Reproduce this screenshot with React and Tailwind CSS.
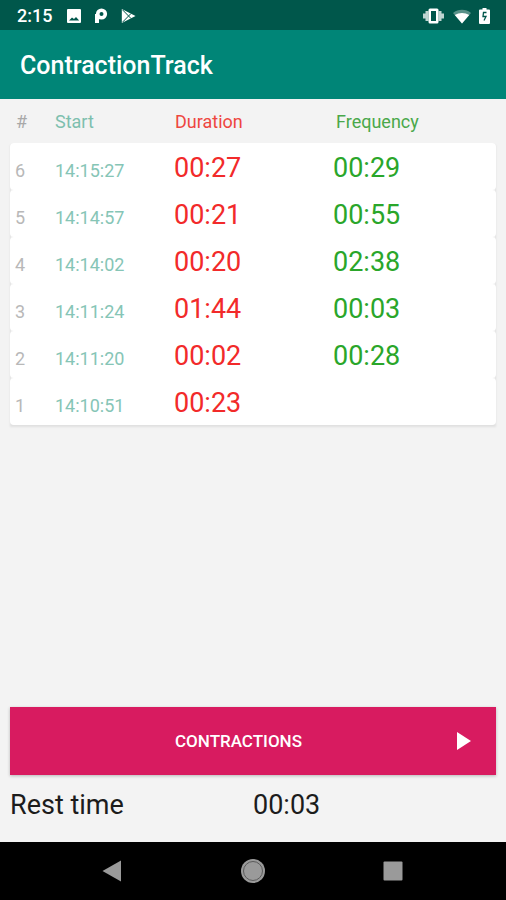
const contractions = [
    { id: 6, start: '14:15:27', duration: '00:27', frequency: '00:29' },
    { id: 5, start: '14:14:57', duration: '00:21', frequency: '00:55' },
    { id: 4, start: '14:14:02', duration: '00:20', frequency: '02:38' },
    { id: 3, start: '14:11:24', duration: '01:44', frequency: '00:03' },
    { id: 2, start: '14:11:20', duration: '00:02', frequency: '00:28' },
    { id: 1, start: '14:10:51', duration: '00:23', frequency: '' },
];

function StatusBar() {
    return (
        <div className="flex h-[30px] items-center justify-between bg-[#00574b] pl-[17px] pr-4 pt-[2px] text-white">
            <div className="flex items-center">
                <span className="text-[18px] leading-[24px] font-medium">2:15</span>
                <svg className="ml-[15px] h-[14px] w-[14px]" viewBox="0 0 14 14" fill="currentColor">
                    <path
                        fillRule="evenodd"
                        d="M1 0h12a1 1 0 0 1 1 1v12a1 1 0 0 1-1 1H1a1 1 0 0 1-1-1V1a1 1 0 0 1 1-1zM2 11.5h10.200L9 8 7 10 5 8.500z"
                    />
                </svg>
                <svg className="ml-[13px] h-[16px] w-[14px]" viewBox="0 0 14 16" fill="none" stroke="currentColor">
                    <circle cx="7.5" cy="6" r="3.8" strokeWidth="3.6" />
                    <path d="M3 6v9" strokeWidth="4" />
                    <path d="M3 9.5h4" strokeWidth="3" />
                </svg>
                <svg className="ml-[13px] h-[16px] w-[15px]" viewBox="0 0 15 16">
                    <path d="M.8 1v14L14.5 8z" fill="currentColor" />
                    <path d="M1.5 1.8 10 10.5M1.5 14.2 10 5.5" stroke="#00574b" strokeWidth="1" fill="none" />
                </svg>
            </div>
            <div className="flex items-center">
                <svg className="h-[16px] w-[21px]" viewBox="0 0 21 16" fill="currentColor">
                    <path d="M0 5.5h2.5v5H0zM2.5 3h3v10h-3zM15.5 3h3v10h-3zM18.5 5.5H21v5h-2.5z" fillOpacity="0.75" />
                    <path
                        fillRule="evenodd"
                        d="M7 .5h7A1.5 1.5 0 0 1 15.5 2v12a1.5 1.5 0 0 1-1.5 1.5H7A1.5 1.5 0 0 1 5.5 14V2A1.5 1.5 0 0 1 7 .5zM8 3v10h5V3z"
                    />
                </svg>
                <svg className="ml-[9px] h-[15px] w-[18px]" viewBox="0 0 18 15" fill="currentColor">
                    <path d="M0 4C5-.2 13-.2 18 4L9 14.5z" fillOpacity="0.35" />
                    <path d="M1.8 6C6 3.200 12 3.200 16.200 6L9 14.5z" />
                </svg>
                <svg className="ml-[8px] h-[16px] w-[11px]" viewBox="0 0 11 16">
                    <path
                        d="M3.5 0h4v1.5H10a1 1 0 0 1 1 1V15a1 1 0 0 1-1 1H1a1 1 0 0 1-1-1V2.500a1 1 0 0 1 1-1h2.500z"
                        fill="currentColor"
                    />
                    <path d="M7.5 4.500h-3L4 8.500h3L5 12.500" stroke="#00574b" strokeWidth="1.300" fill="none" />
                </svg>
            </div>
        </div>
    );
}

function ContractionTable() {
    return (
        <table className="w-full table-fixed border-separate border-spacing-0 text-left">
            <colgroup>
                <col className="w-[45px]" />
                <col className="w-[119px]" />
                <col className="w-[159px]" />
                <col />
            </colgroup>
            <thead>
                <tr className="h-[44px] text-[18px] leading-[24px]">
                    <th className="pt-[2px] pl-[6px] font-normal text-[#a8a8a8]">#</th>
                    <th className="pt-[2px] font-normal text-[#7dbfae]">Start</th>
                    <th className="pt-[2px] pl-px font-normal text-[#ee4640]">Duration</th>
                    <th className="pt-[2px] pl-[3px] font-normal text-[#4aa84a]">Frequency</th>
                </tr>
            </thead>
            <tbody className="bg-[#e6e6e6] shadow-[0_2px_2px_rgba(0,0,0,0.08)]">
                {contractions.map((row) => (
                    <tr key={row.id} className="h-[47px] align-baseline">
                        <td className="rounded-l-[4px] bg-white pt-[8px] pl-[5px] text-[18px] leading-[34px] font-normal text-[#b8b8b8]">
                            {row.id}
                        </td>
                        <td className="bg-white pt-[8px] text-[18px] leading-[34px] font-normal text-[#86c5b6]">
                            {row.start}
                        </td>
                        <td className="bg-white pt-[8px] text-[27px] leading-[34px] font-normal text-[#f22a2a]">
                            {row.duration}
                        </td>
                        <td className="rounded-r-[4px] bg-white pt-[8px] text-[27px] leading-[34px] font-normal text-[#2aa62a]">
                            {row.frequency}
                        </td>
                    </tr>
                ))}
            </tbody>
        </table>
    );
}

function NavBar() {
    return (
        <nav className="flex h-[58px] items-center justify-center gap-[116px] bg-black text-[#9a9a9a]">
            <button type="button" aria-label="Back">
                <svg className="h-6 w-6" viewBox="0 0 24 24" fill="currentColor">
                    <path d="M1.5 12 20 1.5v21z" />
                </svg>
            </button>
            <button type="button" aria-label="Home">
                <svg className="h-6 w-6" viewBox="0 0 24 24" fill="currentColor">
                    <circle cx="12" cy="12" r="12" />
                    <circle cx="12" cy="12" r="9.5" fill="none" stroke="#5a5a5a" />
                </svg>
            </button>
            <button type="button" aria-label="Overview">
                <svg className="h-6 w-6" viewBox="0 0 24 24" fill="currentColor">
                    <rect x="2.5" y="2.5" width="19" height="19" rx="1" />
                </svg>
            </button>
        </nav>
    );
}

export default function App() {
    return (
        <div className="flex min-h-screen flex-col bg-[#f3f3f3] font-['Roboto',sans-serif]">
            <StatusBar />
            <header className="flex h-[69px] items-center bg-[#008577] px-5 pt-[3px]">
                <h1 className="text-[25px] leading-[32px] font-medium text-white">ContractionTrack</h1>
            </header>

            <main className="flex flex-1 flex-col justify-between px-[10px]">
                <ContractionTable />

                <section>
                    <button
                        type="button"
                        className="flex h-[68px] w-full items-center bg-[#d81b60] pr-[25px] pl-[10px] text-white shadow-[0_1px_3px_rgba(0,0,0,0.25)]"
                    >
                        <span className="flex-1 text-center text-[17px] leading-[24px] font-medium">CONTRACTIONS</span>
                        <svg className="h-[18px] w-[14px]" viewBox="0 0 14 18" fill="currentColor">
                            <path d="M0 0v18l14-9z" />
                        </svg>
                    </button>
                    <div className="flex h-[67px] items-start pt-[12px] text-[27px] leading-[36px] font-normal text-[#1c1c1c]">
                        <span className="flex-1">Rest time</span>
                        <span className="flex-1">00:03</span>
                    </div>
                </section>
            </main>

            <NavBar />
        </div>
    );
}
